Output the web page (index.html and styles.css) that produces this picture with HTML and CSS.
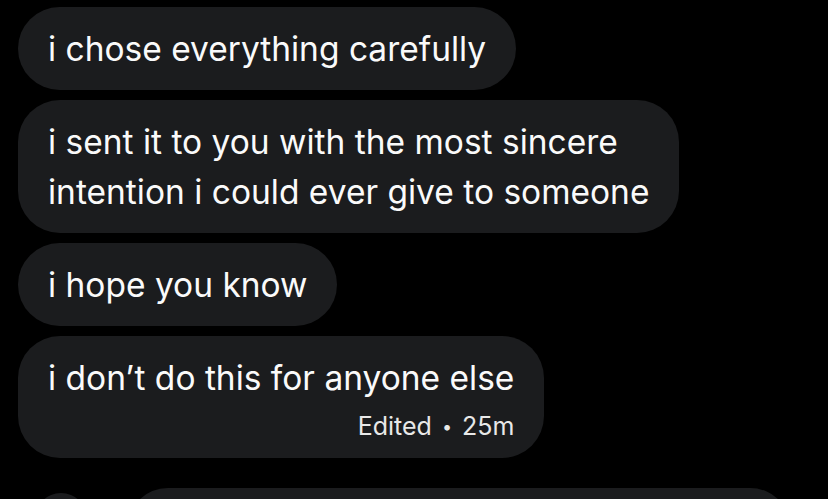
FILE: index.html
```html
<!DOCTYPE html>
<html lang="en">
<head>
<meta charset="utf-8">
<title>Messages</title>
<link rel="stylesheet" href="styles.css">
</head>
<body>
<main class="thread">
  <div class="group">
    <div class="bubble">i chose everything carefully</div>
    <div class="bubble">i sent it to you with the most sincere<br>intention i could ever give to someone</div>
    <div class="bubble">i hope you know</div>
    <div class="bubble edited">
      <div class="text">i don’t do this for anyone else</div>
      <div class="meta">Edited <span class="dot">•</span> 25m</div>
    </div>
  </div>
  <div class="next">
    <div class="avatar"></div>
    <div class="bubble wide"></div>
  </div>
</main>
</body>
</html>
```

FILE: styles.css
```css
html, body {
  margin: 0;
  padding: 0;
  background: #000;
  height: 100%;
  overflow: hidden;
}

.thread {
  display: flex;
  flex-direction: column;
  gap: 30px;
  padding: 7px 0 0 18px;
  font-family: Inter, "Noto Sans", sans-serif;
  color: #fafafa;
}

.group {
  display: flex;
  flex-direction: column;
  align-items: flex-start;
  gap: 10px;
}

.bubble {
  background: #1b1c1e;
  border-radius: 42px;
  padding: 17px 30px 16px 30px;
  font-size: 33.5px;
  line-height: 50px;
  white-space: nowrap;
}

.bubble.edited {
  padding: 17px 30px 16px 30px;
  display: flex;
  flex-direction: column;
}

.meta {
  align-self: flex-end;
  margin-top: 8px;
  font-size: 25px;
  line-height: 30px;
  color: #e8e8e8;
}

.dot {
  font-size: 18px;
  margin: 0 3px;
  vertical-align: 2px;
}

.next {
  display: flex;
  align-items: flex-start;
  gap: 40px;
  padding-left: 17px;
}

.avatar {
  width: 52px;
  height: 52px;
  border-radius: 50%;
  background: #1b1c1e;
  margin-top: 5px;
  flex: none;
}

.bubble.wide {
  width: 604px;
  height: 82px;
  padding: 0 30px;
}
```
